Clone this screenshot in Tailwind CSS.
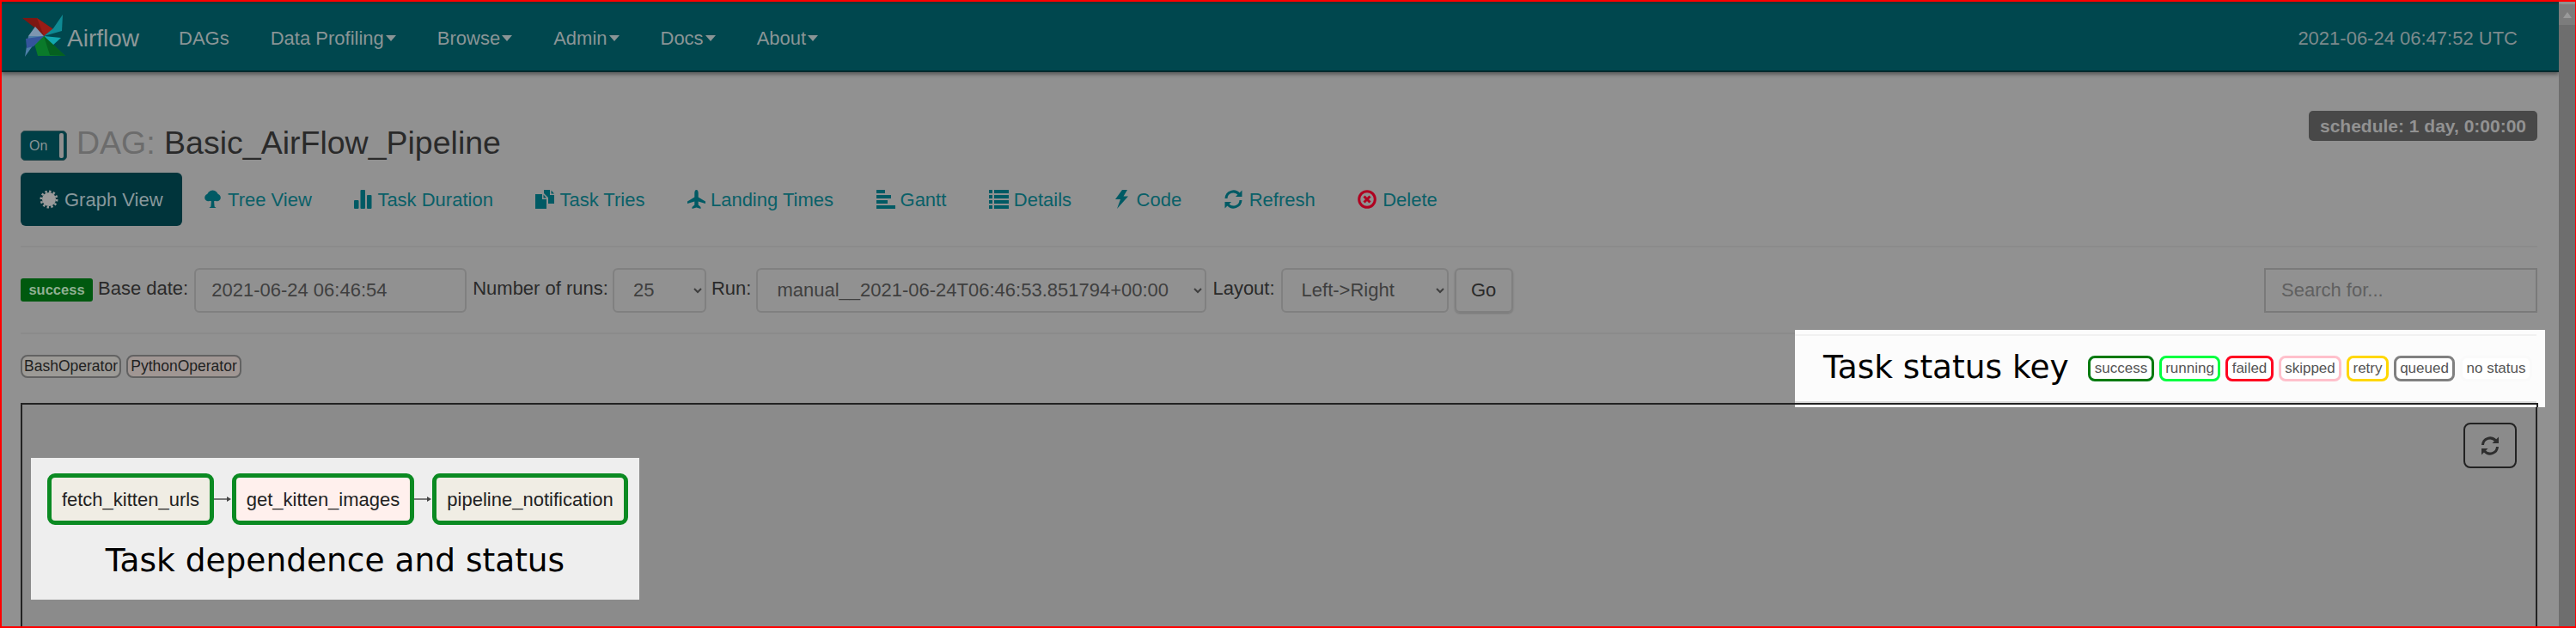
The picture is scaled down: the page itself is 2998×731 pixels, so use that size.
<!DOCTYPE html>
<html lang="en">
<head>
  <meta charset="UTF-8" />
  <title>Airflow - Graph View</title>
  <script src="https://cdn.jsdelivr.net/npm/@tailwindcss/browser@4"></script>
</head>
<body class="bg-[#919191] overflow-hidden font-['Liberation_Sans',sans-serif]">
  <div class="relative w-[2998px] h-[731px] overflow-hidden border-2 border-r-[1px] border-[#ff0000] flex">
    <div class="flex-1 min-w-0">
      <!-- Navbar -->
      <nav class="h-[82px] bg-[#00474e] border-t-[3px] border-b-[2px] border-t-[#12393d] border-b-[#002a2e] shadow-[0_3px_4px_rgba(0,0,0,0.35)] flex items-center justify-between text-[22px] text-[#8a9596] pl-[22px] pr-[48px] pt-[2px]">
        <div class="flex items-center">
          <svg class="w-[52px] h-[64px] shrink-0" viewBox="24 15 52 64">
            <polygon points="26,23 43,23 62,36 51,44 40,34" fill="#7d1712" />
            <polygon points="43,23 62,36 51,44" fill="#9a1c16" />
            <polygon points="73,19 72,38 51,44 62,35" fill="#0e8a94" />
            <polygon points="51,44 71,46 60,56" fill="#12a6ae" />
            <polygon points="76,67 51,44 40,53 44,67" fill="#0a7a2a" />
            <polygon points="76,67 58,66 51,44" fill="#056020" />
            <polygon points="29,68 33,44 51,44 39,54" fill="#4c7ea8" />
            <polygon points="33,44 41,33 51,44" fill="#7d96b0" />
            <polygon points="30,47 51,44 39,56 31,58" fill="#34549c" />
          </svg>
          <span class="text-[28px] ml-[2px] text-[#8d9899]">Airflow</span>
          <div class="flex items-center gap-[48px] ml-[46px]">
            <span>DAGs</span>
            <span class="flex items-center gap-[2px]">Data Profiling<i class="border-x-[6px] border-x-transparent border-t-[7px] border-t-[#8a9596]"></i></span>
            <span class="flex items-center gap-[2px]">Browse<i class="border-x-[6px] border-x-transparent border-t-[7px] border-t-[#8a9596]"></i></span>
            <span class="flex items-center gap-[2px]">Admin<i class="border-x-[6px] border-x-transparent border-t-[7px] border-t-[#8a9596]"></i></span>
            <span class="flex items-center gap-[2px]">Docs<i class="border-x-[6px] border-x-transparent border-t-[7px] border-t-[#8a9596]"></i></span>
            <span class="flex items-center gap-[2px]">About<i class="border-x-[6px] border-x-transparent border-t-[7px] border-t-[#8a9596]"></i></span>
          </div>
        </div>
        <span class="text-[#7d8a8c]">2021-06-24 06:47:52 UTC</span>
      </nav>

      <main class="pl-[22px] pr-[25px] pt-[45px]">
        <!-- Title -->
        <div class="h-[72px] flex justify-between items-start">
          <div class="flex items-center mt-[23px] h-[35px]">
            <div class="w-[54px] h-[35px] bg-[#003f46] border border-[#2b4a4e] rounded-[5px] flex items-center text-[16px] text-[#8a9596] pl-[9px] relative">On<i class="absolute right-[3px] top-[2px] bottom-[2px] w-[5px] rounded-[2px] bg-[#8f8f8f]"></i></div>
            <h1 class="ml-[11px] -mt-[5px] text-[37.500px] leading-none text-[#2a2a2a]"><span class="text-[#6c6c6c]">DAG:</span> Basic_AirFlow_Pipeline</h1>
          </div>
          <span class="w-[266px] h-[35px] bg-[#484848] rounded-[5px] text-[#929292] text-[21px] font-bold flex items-center justify-center">schedule: 1 day, 0:00:00</span>
        </div>

        <!-- Tabs -->
        <div class="h-[87px] border-b-[2px] border-[#8b8b8b]">
          <div class="flex gap-[3.500px] h-[62px] text-[22px] text-[#0a6068]">
            <a class="flex items-center gap-[7px] px-[22px] rounded-[6px] bg-[#00343b] text-[#88989c]">
              <svg class="w-[22px] h-[22px]" viewBox="0 0 22 22"><circle cx="11" cy="11" r="8" fill="#9a9a9a" /><circle cx="11" cy="11" r="9.2" fill="none" stroke="#9a9a9a" stroke-width="2.6" stroke-dasharray="2.4 2.4" /></svg>
              Graph View
            </a>
            <a class="flex items-center gap-[8px] px-[23px]">
              <svg class="w-[19px] h-[22px]" viewBox="0 0 19 22" fill="#005a64"><circle cx="9.5" cy="7" r="6.5" /><circle cx="4.5" cy="9" r="4.3" /><circle cx="14.5" cy="9" r="4.3" /><path d="M8 12h3l.6 7.5 2 1.5H5.4l2-1.5z" /></svg>
              Tree View
            </a>
            <a class="flex items-center gap-[6px] px-[23px]">
              <svg class="w-[21px] h-[22px]" viewBox="0 0 21 22" fill="#005a64"><rect x="0" y="12" width="5.5" height="10" rx="1" /><rect x="7.5" y="0" width="5.5" height="22" rx="1" /><rect x="15" y="6" width="5.5" height="16" rx="1" /></svg>
              Task Duration
            </a>
            <a class="flex items-center gap-[6px] px-[23px]">
              <svg class="w-[22px] h-[22px]" viewBox="0 0 22 22" fill="#005a64"><path d="M0 5h8v6h5v11H0z" /><path d="M9.5 5.5v4h3.5z" /><path d="M10 0h7v6h5v10h-7V9l-5-5z" /><path d="M18.5 .5v4h3.5z" /></svg>
              Task Tries
            </a>
            <a class="flex items-center gap-[6px] px-[23px]">
              <svg class="w-[21px] h-[22px]" viewBox="0 0 21 22" fill="#005a64"><path d="M10.5 0c1.6 0 2.2 2 2.2 4v4.5l8.300 5v2.500l-8.300-2.500v4l2.800 2.500v2l-5-1.500-5 1.500v-2l2.800-2.500v-4L0 16v-2.500l8.300-5V4c0-2 .6-4 2.200-4z" /></svg>
              Landing Times
            </a>
            <a class="flex items-center gap-[6px] px-[23px]">
              <svg class="w-[22px] h-[22px]" viewBox="0 0 22 22" fill="#005a64"><rect y="0" width="10" height="4" /><rect y="6" width="17" height="4" /><rect y="12" width="13" height="4" /><rect y="18" width="22" height="4" /></svg>
              Gantt
            </a>
            <a class="flex items-center gap-[6px] px-[23px]">
              <svg class="w-[23px] h-[22px]" viewBox="0 0 23 22" fill="#005a64"><rect y="0" width="4" height="4" /><rect y="6" width="4" height="4" /><rect y="12" width="4" height="4" /><rect y="18" width="4" height="4" /><rect x="6" y="0" width="17" height="4" /><rect x="6" y="6" width="17" height="4" /><rect x="6" y="12" width="17" height="4" /><rect x="6" y="18" width="17" height="4" /></svg>
              Details
            </a>
            <a class="flex items-center gap-[10px] px-[23px]">
              <svg class="w-[16px] h-[22px]" viewBox="0 0 16 22" fill="#005a64"><polygon points="9,0 15,0 10.500,7.500 16,7.500 3,22 7,11 1,11" /></svg>
              Code
            </a>
            <a class="flex items-center gap-[8px] px-[23px]">
              <svg class="w-[21px] h-[22px]" viewBox="0 0 21 22" fill="none" stroke="#005a64" stroke-width="3"><path d="M2 10a8.500 8.500 0 0 1 15-5" /><path d="M19 12a8.500 8.500 0 0 1-15 5" /><polygon points="20.500,0.500 20.500,8 13,8" fill="#005a64" stroke="none" /><polygon points="0.500,21.500 0.500,14 8,14" fill="#005a64" stroke="none" /></svg>
              Refresh
            </a>
            <a class="flex items-center gap-[7px] px-[23px]">
              <svg class="w-[22px] h-[22px]" viewBox="0 0 22 22"><circle cx="11" cy="11" r="9.300" fill="none" stroke="#b00020" stroke-width="3" /><path d="M7.500 7.500l7 7m0-7l-7 7" stroke="#b00020" stroke-width="3" /></svg>
              Delete
            </a>
          </div>
        </div>

        <!-- Filters -->
        <div class="h-[101px] border-b-[2px] border-[#8b8b8b] flex items-center justify-between text-[22px] text-[#2a2a2a]">
          <form class="flex items-center gap-[7px]">
            <span class="h-[27px] w-[84px] justify-center bg-[#00590f] text-[#8fb093] text-[16.500px] font-bold rounded-[3px] flex items-center">success</span>
            <label class="-mt-[4px] -ml-[1px]">Base date:</label>
            <input value="2021-06-24 06:46:54" class="w-[317px] h-[52px] px-[18px] bg-transparent border-[2px] border-[#808080] rounded-[6px] text-[#3f3f3f]" />
            <label class="-mt-[4px]">Number of runs:</label>
            <select class="-ml-[2px] w-[109px] h-[52px] px-[18px] bg-transparent border-[2px] border-[#808080] rounded-[6px] text-[#3f3f3f]"><option>25</option></select>
            <label class="-mt-[4px] -ml-[1px]">Run:</label>
            <select class="-ml-[1px] w-[524px] h-[52px] px-[18px] bg-transparent border-[2px] border-[#808080] rounded-[6px] text-[#3f3f3f]"><option>manual__2021-06-24T06:46:53.851794+00:00</option></select>
            <label class="-mt-[4px]">Layout:</label>
            <select class="w-[195px] h-[52px] px-[18px] bg-transparent border-[2px] border-[#808080] rounded-[6px] text-[#3f3f3f]"><option>Left-&gt;Right</option></select>
            <button type="button" class="w-[68px] h-[52px] border-[2px] border-[#808080] rounded-[6px] shadow-[0_1px_2px_rgba(0,0,0,0.2)]">Go</button>
          </form>
          <input placeholder="Search for..." class="w-[318px] h-[52px] px-[18px] bg-transparent border-[2px] border-[#7a7a7a] placeholder:text-[#606060]" />
        </div>

        <!-- Operators -->
        <div class="h-[80px] flex items-start gap-[6px] pt-[24px] text-[17.500px] text-[#222222]">
          <span class="h-[27px] w-[117px] flex items-center justify-center rounded-[8px] border-[2px] border-[#626262] bg-[#9c9a96]">BashOperator</span>
          <span class="h-[27px] w-[134px] flex items-center justify-center rounded-[8px] border-[2px] border-[#626262] bg-[#a09693]">PythonOperator</span>
        </div>

        <!-- Graph -->
        <div class="relative h-[300px] border-[2px] border-[#222222] bg-[#8b8b8b]">
          <div class="ml-[10px] mt-[62px] w-[708px] h-[165px] bg-[#eeeeee] pt-[18px] pl-[19px]">
            <div class="flex items-center">
              <div class="w-[194px] h-[60px] flex items-center justify-center border-[5px] border-[#0b8a22] rounded-[9px] bg-[#f0ede4] text-[22px] text-[#222222]">fetch_kitten_urls</div>
              <svg class="w-[21px] h-[10px]" viewBox="0 0 21 10"><rect y="4" width="17" height="2" fill="#777777" /><polygon points="15,2 20,5 15,8" fill="#444444" /></svg>
              <div class="w-[212px] h-[60px] flex items-center justify-center border-[5px] border-[#0b8a22] rounded-[9px] bg-[#fff0ed] text-[22px] text-[#222222]">get_kitten_images</div>
              <svg class="w-[21px] h-[10px]" viewBox="0 0 21 10"><rect y="4" width="17" height="2" fill="#777777" /><polygon points="15,2 20,5 15,8" fill="#444444" /></svg>
              <div class="w-[228px] h-[60px] flex items-center justify-center border-[5px] border-[#0b8a22] rounded-[9px] bg-[#f0ede4] text-[22px] text-[#222222]">pipeline_notification</div>
            </div>
            <p class="-ml-[19px] mt-[18px] text-center text-[37.500px] leading-[46px] text-black font-['DejaVu_Sans',sans-serif]">Task dependence and status</p>
          </div>
          <button type="button" class="absolute top-[21px] right-[22px] w-[62px] h-[53px] flex items-center justify-center rounded-[8px] border-[2px] border-[#222222]">
            <svg class="w-[22px] h-[22px]" viewBox="0 0 21 22" fill="none" stroke="#2e2e2e" stroke-width="3"><path d="M2 10a8.500 8.500 0 0 1 15-5" /><path d="M19 12a8.500 8.500 0 0 1-15 5" /><polygon points="20.500,0.500 20.500,8 13,8" fill="#2e2e2e" stroke="none" /><polygon points="0.500,21.500 0.500,14 8,14" fill="#2e2e2e" stroke="none" /></svg>
          </button>
        </div>
      </main>
    </div>

    <!-- Scrollbar -->
    <div class="w-[19px] mt-[3px] bg-[#6e6e6e] shrink-0">
      <div class="h-[24px] bg-[#7c7c7c] flex items-center justify-center"><i class="border-x-[5px] border-x-transparent border-b-[7px] border-b-[#9a9a9a]"></i></div>
    </div>

    <!-- Task status key highlight -->
    <div class="absolute left-[2087px] top-[382px] w-[873px] h-[90px] bg-[#fcfcfc] flex items-center pl-[33px]">
      <i class="absolute left-0 w-[863px] top-[5px] h-[2px] bg-[#f1f1f1]"></i>
      <i class="absolute left-0 w-[863px] top-[83px] h-[2px] bg-[#dddddd]"></i>
      <i class="absolute left-0 w-[865px] top-[85px] h-[2px] bg-[#222222]"></i>
      <i class="absolute left-[863px] w-[2px] top-[85px] h-[5px] bg-[#222222]"></i>
      <span class="w-[308px] -mt-[4px] text-[37.500px] text-black font-['DejaVu_Sans',sans-serif]">Task status key</span>
      <div class="flex gap-[6px] text-[17px] text-[#555555]">
        <span class="h-[30px] w-[77px] flex items-center justify-center rounded-[8px] border-[3px] border-[#007a10] bg-white">success</span>
        <span class="h-[30px] w-[71px] flex items-center justify-center rounded-[8px] border-[3px] border-[#00ff40] bg-white">running</span>
        <span class="h-[30px] w-[56px] flex items-center justify-center rounded-[8px] border-[3px] border-[#ff0020] bg-white">failed</span>
        <span class="h-[30px] w-[73px] flex items-center justify-center rounded-[8px] border-[3px] border-[#ffc0cb] bg-white">skipped</span>
        <span class="h-[30px] w-[49px] flex items-center justify-center rounded-[8px] border-[3px] border-[#ffd700] bg-white">retry</span>
        <span class="h-[30px] w-[71px] flex items-center justify-center rounded-[8px] border-[3px] border-[#808080] bg-white">queued</span>
        <span class="h-[30px] w-[84px] flex items-center justify-center rounded-[8px] border-[3px] border-[#fafafa] bg-white">no status</span>
      </div>
    </div>
  </div>
</body>
</html>
